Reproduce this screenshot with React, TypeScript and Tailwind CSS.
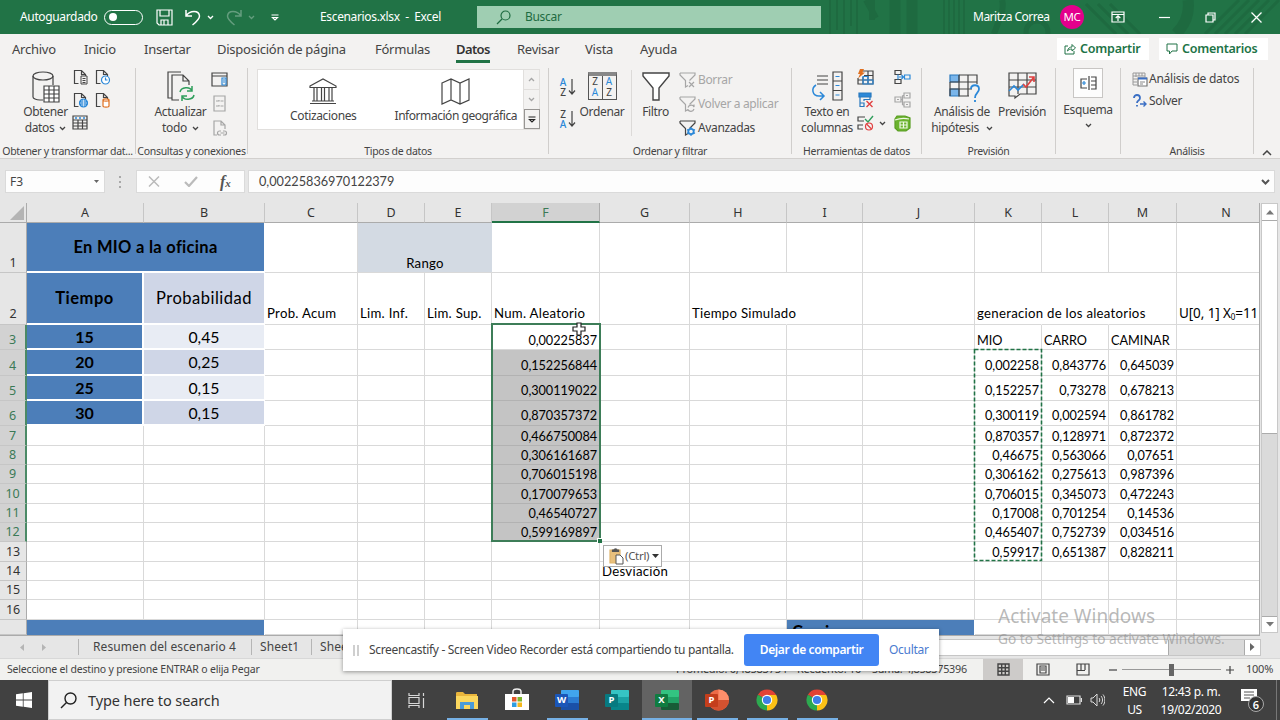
import type { ReactNode } from "react";

/* ---------- shared pieces ---------- */

function Svg({ w, h, c = "", children }: { w: number; h: number; c?: string; children: ReactNode }) {
  return (
    <svg width={w} height={h} viewBox={`0 0 ${w} ${h}`} fill="none" stroke="#444" strokeWidth="1.2" className={"shrink-0 " + c}>
      {children}
    </svg>
  );
}

function Chevron({ c = "" }: { c?: string }) {
  return (
    <Svg w={7} h={5} c={c}>
      <path d="M1 1l2.500 2.500L6 1" stroke="currentColor" strokeWidth="1.3" />
    </Svg>
  );
}

/* ---------- title bar ---------- */

function TitleBar() {
  return (
    <header className="relative flex h-[34px] shrink-0 items-center bg-[#217346] text-[12px] text-white">
      <svg width="460" height="34" className="absolute top-0 right-0" stroke="#1e6a40" fill="none">
        <path d="M10 0v34M17 0v30M24 0v34M31 0v26M37 0v34M124 0v34M129 0v34M134 0v34M139 0v34M144 0v34" strokeWidth="2" />
        <path d="M46 0l10 18M52 0v20" strokeWidth="6" />
        <path d="M75 0v34M92 0v34" strokeWidth="11" />
        <circle cx="217" cy="32" r="11" strokeWidth="5" />
        <path d="M182 0c3 10-4 22-8 34" strokeWidth="6" />
        <path d="M266 4l30 30M278 4l30 30M290 4l30 30M385 34l34-34M395 34l34-34M405 34l34-34M415 34l34-34M425 34l34-34" strokeWidth="3" />
        <path d="M368 0c2 14-4 26-12 34" strokeWidth="11" />
      </svg>
      <div className="relative flex w-full items-center">
        <span className="w-[84px] pl-[20px] whitespace-nowrap tracking-[-0.35px]">Autoguardado</span>
        <span className="ml-[20px] flex h-[15px] w-[39px] items-center rounded-full border border-white pl-[4px]">
          <span className="size-[8px] rounded-full bg-white" />
        </span>
        <Svg w={17} h={17} c="ml-[13px]">
          <path d="M1 1h15v15H3l-2-2zM4 1v6h9V1M5 16v-5h7v5M8 11v5" stroke="#fff" />
        </Svg>
        <Svg w={16} h={17} c="ml-[12px]">
          <path d="M1 1v6h6M1 7C5 1 14 1 14.500 7c0 3-2 5-7 9" stroke="#fff" strokeWidth="1.5" />
        </Svg>
        <Chevron c="ml-[6px]" />
        <Svg w={16} h={17} c="ml-[12px] opacity-30">
          <path d="M15 1v6H9M15 7C11 1 2 1 1.500 7c0 3 2 5 7 9" stroke="#fff" strokeWidth="1.5" />
        </Svg>
        <Chevron c="ml-[6px] opacity-30" />
        <Svg w={8} h={7} c="ml-[16px]">
          <path d="M.5 1h7M1.500 3.500h5L4 6z" stroke="#fff" />
        </Svg>
        <span className="ml-[41px] w-[157px] whitespace-pre tracking-[-0.35px]">Escenarios.xlsx  -  Excel</span>
        <div className="flex h-[22px] w-[344px] items-center bg-[#9fceb2] pl-[19px] text-[12px] text-[#1e6b41]">
          <Svg w={15} h={15}>
            <path d="M1 14l5-5" stroke="#1e6b41" />
            <circle cx="9.500" cy="5.500" r="4.500" stroke="#1e6b41" />
          </Svg>
          <span className="ml-[14px] tracking-[-0.3px]">Buscar</span>
        </div>
        <span className="ml-[152px] w-[87px] whitespace-nowrap tracking-[-0.5px]">Maritza Correa</span>
        <span className="flex size-[24px] items-center justify-center rounded-full bg-[#e3008c] text-[11.500px] tracking-tight">MC</span>
        <Svg w={14} h={12} c="ml-[27px]">
          <path d="M1 1h12v10H1zM1 3.500h12M7 10V5M4.700 7L7 4.800 9.300 7" stroke="#fff" />
        </Svg>
        <Svg w={11} h={11} c="ml-[34px]">
          <path d="M0 5.500h11" stroke="#fff" />
        </Svg>
        <Svg w={11} h={11} c="ml-[35px]">
          <path d="M1 3h7v7H1zM3 3V1h7v7H8" stroke="#fff" />
        </Svg>
        <Svg w={11} h={11} c="ml-[35px]">
          <path d="M.5 .5l10 10M10.500 .5l-10 10" stroke="#fff" strokeWidth="1.3" />
        </Svg>
      </div>
    </header>
  );
}

/* ---------- ribbon tabs ---------- */

const tabs: [string, string][] = [
  ["Archivo", "w-[72px]"],
  ["Inicio", "w-[60px]"],
  ["Insertar", "w-[73px]"],
  ["Disposición de página", "w-[158px]"],
  ["Fórmulas", "w-[81px]"],
  ["Datos", "w-[61px]"],
  ["Revisar", "w-[68px]"],
  ["Vista", "w-[55px]"],
  ["Ayuda", "w-[60px]"],
];

function Tabs() {
  return (
    <nav className="flex h-[32px] shrink-0 items-start bg-[#f3f2f1] pl-[12px] text-[13px] text-[#444]">
      {tabs.map(([t, w]) => (
        <span key={t} className={"flex pt-[5px] whitespace-nowrap tracking-[-0.25px] " + w}>
          <span className={"leading-[20px] " + (t === "Datos" ? "h-[24px] border-b-[3px] border-[#217346] font-semibold text-[#333] tracking-[-0.6px]" : "")}>{t}</span>
        </span>
      ))}
      <div className="mt-[4px] mr-[12px] ml-auto flex gap-[10px] text-[12.500px] font-semibold text-[#217346]">
        <span className="flex h-[22px] w-[92px] items-center bg-white pl-[7px] tracking-[-0.2px]">
          <Svg w={12} h={12} c="mr-[4px]">
            <path d="M4 3H1v8h9V8M3.500 8C4 5 6 4 8 4V1.500l3.500 3.500L8 8V6C6 6 5 6.500 3.500 8z" stroke="#217346" strokeWidth="1" />
          </Svg>
          Compartir
        </span>
        <span className="flex h-[22px] w-[109px] items-center bg-white pl-[7px] tracking-[-0.25px]">
          <Svg w={12} h={12} c="mr-[4px]">
            <path d="M1 1h10v7H6l-2.500 3V8H1z" stroke="#217346" strokeWidth="1" />
          </Svg>
          Comentarios
        </span>
      </div>
    </nav>
  );
}

/* ---------- ribbon icons ---------- */

const page = "M5.500 14.500H1.500V1.500h7l4 4V7M8.500 1.500v4h4";
const B = "#2b88d8";
const G = "#a6a6a6";

function Funnel({ off }: { off?: boolean }) {
  return <path d="M1 1h15v2l-5.500 5.500M1 1v2l5.500 5.500V15L9 13.500" stroke={off ? G : "#444"} />;
}

function Big({ w, icon, a, b }: { w: string; icon: ReactNode; a: string; b?: ReactNode }) {
  return (
    <div className={"flex shrink-0 flex-col items-center pt-[3px] " + w}>
      <div className="flex h-[33px] items-start">{icon}</div>
      <span className="leading-[16px] whitespace-nowrap">{a}</span>
      {b && <span className="flex items-center gap-[5px] leading-[16px] whitespace-nowrap">{b}</span>}
    </div>
  );
}

function Group({ w, label, children }: { w: string; label?: string; children: ReactNode }) {
  return (
    <section className={"mt-[2px] mb-[4px] flex shrink-0 flex-col border-r border-[#d0cecc] " + w}>
      <div className="flex h-[77px] shrink-0 items-start">{children}</div>
      <div className="flex h-[13px] shrink-0 items-start justify-center text-[10.500px] leading-[13px] tracking-[-0.3px] whitespace-nowrap">{label}</div>
    </section>
  );
}

function Ribbon() {
  return (
    <div className="flex h-[93px] shrink-0 border-b border-[#d2d0ce] bg-[#f3f2f1] text-[12px] tracking-[-0.35px] text-[#444]">
      <Group w="w-[136px]" label="Obtener y transformar dat...">
        <Big
          w="w-[68px] pl-[23px]"
          icon={
            <Svg w={28} h={32}>
              <path d="M11 29H8C4 29 1 27.500 1 26V5M21 5v9" />
              <ellipse cx="11" cy="5" rx="10" ry="4" />
              <path d="M12 15h15v16H12z" fill="#fff" />
              <path d="M12 19h15M12 23h15M12 27h15M17 15v16M22 15v16" />
            </Svg>
          }
          a="Obtener"
          b={<>datos <Chevron c="text-[#444]" /></>}
        />
        <div className="ml-[5px] grid grid-cols-2 gap-x-[6px] gap-y-[7px] pt-[1px]">
          <Svg w={16} h={16}>
            <path d={page} />
            <path d="M8 7h6v8H8zM9.500 9.500h3M9.500 11.500h3M9.500 13.500h3" strokeWidth="1" />
          </Svg>
          <Svg w={16} h={16}>
            <path d={page} />
            <circle cx="10.500" cy="11" r="4" fill="#fff" stroke={B} />
            <path d="M10.500 8.500V11h2" stroke={B} />
          </Svg>
          <Svg w={16} h={16}>
            <path d={page} />
            <circle cx="10.500" cy="11" r="4" fill={B} stroke={B} />
            <path d="M7 11h7M10.500 7.500v7M8 9h5M8 13h5" stroke="#fff" strokeWidth=".6" />
          </Svg>
          <Svg w={16} h={16}>
            <path d={page} />
            <path d="M8 8v6c0 1.500 6 1.500 6 0V8c0-1.500-6-1.500-6 0c0 1.500 6 1.500 6 0" fill="#fff" stroke="#e07020" />
          </Svg>
          <Svg w={16} h={15} c="-ml-[1px]">
            <path d="M1 1h14v13H1zM1 5h14M1 8h14M1 11h14M6 5v9M10.500 5v9" />
            <path d="M3 3h2M7 3h2M11 3h2" stroke={B} strokeWidth="1.6" />
          </Svg>
        </div>
      </Group>

      <Group w="w-[112px]" label="Consultas y conexiones">
        <Big
          w="w-[71px] pl-[18px]"
          icon={
            <Svg w={28} h={32}>
              <path d="M5 27H1V1h13M12 29H5V4h11l6 6v4M16 4v6h6" />
              <path d="M13 21c1-5 10-6 12-1M25 15v5h-5M27 24c-1 5-10 6-12 1M15 30v-5h5" stroke="#2e9e5b" strokeWidth="1.500" />
            </Svg>
          }
          a="Actualizar"
          b={<>todo <Chevron c="text-[#444]" /></>}
        />
        <div className="ml-[4px] flex flex-col gap-[8px] pt-[4px]">
          <Svg w={17} h={15}>
            <path d="M1 1h15v13H1zM1 4h15" />
            <path d="M11 6h4v7h-4zM12 8h2M12 10h2" stroke={B} />
          </Svg>
          <Svg w={17} h={17}>
            <path d="M3 1h11v15H3zM5 6h3v-1M9.500 6h3M5 11h3v-1M9.500 11h3" stroke={G} />
          </Svg>
          <Svg w={17} h={17}>
            <path d="M6 15H3V1h7l4 4v4M10 1v4h4" stroke={G} />
            <path d="M10 11H8.500a2 2 0 000 4H10M12 11h1.500a2 2 0 010 4H12M9.500 13h4" stroke={G} />
          </Svg>
        </div>
      </Group>

      <Group w="w-[301px]" label="Tipos de datos">
        <div className="mt-px ml-[9px] flex h-[61px] w-[283px] border border-[#e1dfdd] bg-white">
          <div className="flex w-[131px] flex-col items-center pt-[8px]">
            <Svg w={28} h={27}>
              <path d="M1 8L14 1l13 7v1.500H1zM3 23h22M1 25.500h26M5 10v12.500M8 10v12.500M12.500 10v12.500M15.500 10v12.500M20 10v12.500M23 10v12.500" />
            </Svg>
            <span className="mt-[3px] leading-[16px]">Cotizaciones</span>
          </div>
          <div className="flex w-[135px] flex-col items-center pt-[8px]">
            <Svg w={30} h={27}>
              <path d="M1 5l9-4 9 4 9-4v21l-9 4-9-4-9 4zM10 1v21M19 5v21" />
            </Svg>
            <span className="mt-[3px] leading-[16px] tracking-[-0.45px] whitespace-nowrap">Información geográfica</span>
          </div>
          <div className="ml-auto flex w-[16px] flex-col border-l border-[#e1dfdd] bg-[#f3f2f1]">
            <span className="flex flex-1 items-center justify-center border-b border-[#e1dfdd]"><Chevron c="rotate-180 text-[#a6a6a6]" /></span>
            <span className="flex flex-1 items-center justify-center"><Chevron c="text-[#a6a6a6]" /></span>
            <span className="-mr-px flex h-[20px] items-center justify-center border border-[#979593]">
              <Svg w={8} h={7}><path d="M.5 1h7M1.500 3.500h5L4 6z" stroke="#222" /></Svg>
            </span>
          </div>
        </div>
      </Group>

      <Group w="w-[243px]" label="Ordenar y filtrar">
        <div className="ml-[10px] flex w-[22px] flex-col gap-[12px] pt-[9px]">
          {[["A", "Z"], ["Z", "A"]].map(([p, q]) => (
            <div key={p} className="flex h-[20px] items-center gap-[1px]">
              <span className="flex w-[8px] flex-col items-center text-[10px] leading-[10px] font-medium tracking-normal">
                <span className={p === "A" ? "text-[#2b88d8]" : ""}>{p}</span>
                <span className={q === "A" ? "text-[#2b88d8]" : ""}>{q}</span>
              </span>
              <Svg w={8} h={18}><path d="M4 1v15M1 12.500l3 3.500 3-3.500" /></Svg>
            </div>
          ))}
        </div>
        <Big
          w="w-[42px]"
          icon={
            <div className="mt-px flex h-[28px] w-[29px] border border-t-4 border-[#555] border-t-[#888] bg-[#f3f2f1] text-[10px] leading-[11px] tracking-normal">
              <span className="flex flex-1 flex-col items-center border-r border-[#555]">
                <span>Z</span>
                <span className="text-[#2b88d8]">A</span>
              </span>
              <span className="flex flex-1 flex-col items-center">
                <span className="text-[#2b88d8]">A</span>
                <span>Z</span>
              </span>
            </div>
          }
          a="Ordenar"
        />
        <div className="mt-[2px] ml-[8px] h-[66px] w-px bg-[#dcdad8]" />
        <Big
          w="w-[46px] pl-[1px]"
          icon={<Svg w={28} h={30} c="mt-[1px]"><path d="M1 1h26v3L17 16v12h-6V16L1 4z" fill="#fff" strokeWidth="1.400" /></Svg>}
          a="Filtro"
        />
        <div className="ml-[1px] flex flex-col leading-[24px]">
          <span className="flex items-center gap-[2px] text-[#a6a6a6]">
            <Svg w={17} h={16}><Funnel off /><path d="M10 10l5 5M15 10l-5 5" stroke={G} /></Svg>Borrar
          </span>
          <span className="flex items-center gap-[2px] whitespace-nowrap text-[#a6a6a6]">
            <Svg w={17} h={16}><Funnel off /><path d="M9 11.500c1-3 5-3 6-.5V8.500M15 13c-1 3-5 3-6 .5V15" stroke={G} /></Svg>Volver a aplicar
          </span>
          <span className="flex items-center gap-[2px]">
            <Svg w={17} h={16}><Funnel /><circle cx="12" cy="11.500" r="2.700" stroke={B} strokeWidth="1.800" /><path d="M12 7v2M12 14v2M8 9.500l1.500 1M14.500 12.500l1.500 1M8 13.500l1.500-1M14.500 10.500l1.500-1" stroke={B} /></Svg>Avanzadas
          </span>
        </div>
      </Group>

      <Group w="w-[130px]" label="Herramientas de datos">
        <Big
          w="w-[63px] pl-[7px]"
          icon={
            <Svg w={32} h={32}>
              <path d="M6 5h11M6 9h11M6 13h11M22 1h9v28h-9zM22 10h9M22 19.500h9" />
              <path d="M24.500 5.500h4M24.500 14.500h4M24.500 24h4" stroke={B} />
              <path d="M5 14c-5 3-4 11 3 11h5M9 21l4 4-4 4" stroke={B} strokeWidth="1.500" />
            </Svg>
          }
          a="Texto en"
          b="columnas"
        />
        <div className="ml-[2px] flex w-[18px] flex-col gap-[7px] pt-[1px]">
          <Svg w={17} h={16}>
            <path d="M6 2h10v13H1V9M1 11h15M7 6.500h9M6 15V8M11 15V2" />
            <path d="M6 11V7.500h5V11M6 11h5v4H6zM11 11h5v4h-5z" stroke={B} />
            <path d="M3 0h4L5.500 3.500H8L1 9.500l2-4.500H1z" fill="#e07020" stroke="none" />
          </Svg>
          <Svg w={17} h={16}>
            <path d="M2 1h12v4H2z" fill={B} stroke="#2878bd" /><path d="M3 5v9.500h4V11H3M7 9V7.500h6V5" stroke="#2878bd" />
            <path d="M9.500 9l6 6M15.500 9l-6 6" stroke="#e04040" strokeWidth="1.400" />
          </Svg>
          <Svg w={17} h={16}>
            <path d="M8 2H1v4h6M6 10H1v4h5" /><path d="M8 4l3 3 5-6" stroke="#2e9e5b" strokeWidth="1.400" /><circle cx="12" cy="11.500" r="3.500" stroke="#e04040" /><path d="M9.500 9l5 5" stroke="#e04040" />
          </Svg>
        </div>
        <Chevron c="mt-[53px] ml-[4px] text-[#444]" />
        <div className="ml-[8px] flex flex-col gap-[7px] pt-[1px]">
          <Svg w={17} h={16}>
            <path d="M1 1.500h6v4H1zM1 10.500h6v4H1z" /><path d="M4 5.500v5M5 8h4.500M7.500 6l2 2-2 2M10.500 6H16v4h-5.500z" stroke={B} />
          </Svg>
          <Svg w={17} h={16}>
            <path d="M1 5h6v5H1zM10 1h6v5h-6zM10 10h6v5h-6zM7 7.500h1.500M8.500 3.500V13M8.500 3.500H10M8.500 13H10M3 7.500h2M12 3.500h2M12 12.500h2" stroke={G} />
          </Svg>
          <Svg w={17} h={17}>
            <path d="M3 1h8l5 2v10l-4 3H4l-3-3V4z" fill="#6bb32e" stroke="#5a9e24" />
            <path d="M1 5c5-2 10-2 14-1M6 7h7v6H6zM6 10h7M9.500 7v6" stroke="#eef8e4" />
          </Svg>
        </div>
      </Group>

      <Group w="w-[134px]" label="Previsión">
        <Big
          w="w-[80px]"
          icon={
            <Svg w={32} h={32} c="ml-[6px]">
              <path d="M1 4h9v7H1zM1 18h9v7H1z" fill="#79b5ea" stroke="#2878bd" />
              <path d="M10 4h18v7H1M10 4v21h10M1 11v14M1 18h22M19 4v21M28 11v2" />
              <path d="M22 18c0-5 8-5 8 0 0 4-4 4-4 9M26 29v2" stroke={B} strokeWidth="1.800" />
            </Svg>
          }
          a="Análisis de"
          b={<>hipótesis <Chevron c="ml-[2px] text-[#444]" /></>}
        />
        <Big
          w="w-[40px]"
          icon={
            <Svg w={29} h={28} c="mt-[1px]">
              <path d="M1 1h27v21H12l-5 4v-2H1zM1 8h27M1 15h27M10 1v21M19 1v21" />
              <path d="M1 19l5-5 4 4 6-6" stroke={B} strokeWidth="1.600" />
              <path d="M15 12l3 3 8-10M21 5h5v5" stroke="#e04040" strokeWidth="1.600" />
            </Svg>
          }
          a="Previsión"
        />
      </Group>

      <Group w="w-[65px]">
        <div className="flex w-full flex-col items-center">
          <div className="flex h-[30px] w-[30px] items-center justify-center border border-[#c8c6c4] bg-[#fdfdfd]">
            <Svg w={17} h={16}>
              <path d="M7 4H1v9h6M9 1v14" /><path d="M4 6v4M2 8h4" stroke={B} /><path d="M11 2h5v12h-5M11 6h5M11 10h5" />
            </Svg>
          </div>
          <span className="mt-[4px] leading-[16px]">Esquema</span>
          <Chevron c="mt-[5px] text-[#444]" />
        </div>
      </Group>

      <Group w="w-[133px]" label="Análisis">
        <div className="ml-[11px] flex flex-col leading-[22px] whitespace-nowrap">
          <span className="flex items-center gap-[1px] tracking-[-0.25px]">
            <Svg w={16} h={15}>
              <path d="M1 1h12M1 1v12h4M1 4h12M1 7h4M1 10h4M4 1v4M7 1v3M10 1v3M13 1v4" stroke="#999" strokeWidth="1" />
              <path d="M6 6h9v8H6z" fill="#fff" stroke="#777" /><path d="M6 6.500h9" stroke="#3b6fc4" strokeWidth="2" /><path d="M8 10h5M8 12h3" stroke="#888" strokeWidth="1" />
            </Svg>
            Análisis de datos
          </span>
          <span className="flex items-center gap-[1px] tracking-[-0.25px]">
            <Svg w={16} h={15}>
              <path d="M2 4c0-4 6-4 6 0 0 3-3 2-3 5M5 11v1.500" stroke="#3b6fc4" strokeWidth="1.800" />
              <path d="M8 10h6M11.500 7.500L14 10l-2.500 2.500" stroke="#3b6fc4" strokeWidth="1.400" />
            </Svg>
            Solver
          </span>
        </div>
      </Group>
      <Svg w={10} h={6} c="mt-[84px] ml-[8px]"><path d="M1 5l4-4 4 4" strokeWidth="1.500" /></Svg>
    </div>
  );
}

/* ---------- formula bar ---------- */

function FormulaBar() {
  return (
    <div className="flex h-[44px] shrink-0 items-start bg-[#e6e6e6] pt-[11px] pl-[5px] text-[12px] text-[#444]">
      <div className="flex h-[23px] w-[100px] items-center justify-between border border-[#dadada] bg-[#fdfdfd] pr-[5px] pl-[4px]">
        F3
        <Svg w={5} h={4}><path d="M0 0h5L2.500 3z" fill="#666" stroke="none" /></Svg>
      </div>
      <div className="mt-[6px] ml-[14px] flex w-[17px] flex-col gap-[3px]">
        <i className="size-[2px] bg-[#a8a8a8]" />
        <i className="size-[2px] bg-[#a8a8a8]" />
        <i className="size-[2px] bg-[#a8a8a8]" />
      </div>
      <div className="flex h-[23px] w-[109px] items-center border border-[#dadada] bg-[#fdfdfd] pl-[11px]">
        <Svg w={12} h={11}><path d="M1 .5l10 10M11 .5l-10 10" stroke="#bbb" strokeWidth="1.500" /></Svg>
        <Svg w={14} h={11} c="ml-[24px]"><path d="M1 6l4 4 8-9" stroke="#bbb" strokeWidth="2.200" /></Svg>
        <span className="ml-[22px] font-['Liberation_Serif',serif] text-[16px] leading-none font-semibold text-[#555] italic">
          f<span className="text-[11px]">x</span>
        </span>
      </div>
      <div className="ml-[3px] flex h-[23px] w-[1027px] items-center justify-between border border-[#dadada] bg-[#fdfdfd] pr-[4px] pl-[10px]">
        <span className="font-[Lato,'Noto_Sans',sans-serif] text-[12.700px]">0,00225836970122379</span>
        <Svg w={9} h={6}><path d="M1 1l3.500 3.500L8 1" strokeWidth="2" stroke="#555" /></Svg>
      </div>
    </div>
  );
}

/* ---------- worksheet ---------- */

const cols = "ABCDEFGHIJKLMN".split("");
const rowH = [
  "h-[50px]", "h-[52px]", "h-[25px]", "h-[26px]", "h-[25px]", "h-[25px]", "h-[20px]", "h-[19px]", "h-[19px]",
  "h-[20px]", "h-[19px]", "h-[19px]", "h-[20px]", "h-[19px]", "h-[19px]", "h-[20px]", "h-[15px]",
];
const F = ["0,00225837", "0,152256844", "0,300119022", "0,870357372", "0,466750084", "0,306161687", "0,706015198", "0,170079653", "0,46540727", "0,599169897"];
const K = ["0,002258", "0,152257", "0,300119", "0,870357", "0,46675", "0,306162", "0,706015", "0,17008", "0,465407", "0,59917"];
const L = ["0,843776", "0,73278", "0,002594", "0,128971", "0,563066", "0,275613", "0,345073", "0,701254", "0,752739", "0,651387"];
const M = ["0,645039", "0,678213", "0,861782", "0,872372", "0,07651", "0,987396", "0,472243", "0,14536", "0,034516", "0,828211"];
const times = ["15", "20", "25", "30"];
const probs = ["0,45", "0,25", "0,15", "0,15"];
const row2: Record<string, string> = {
  C: "Prob. Acum", D: "Lim. Inf.", E: "Lim. Sup.", F: "Num. Aleatorio", H: "Tiempo Simulado", K: "generacion de los aleatorios",
};
const row3: Record<string, string> = { K: "MIO", L: "CARRO", M: "CAMINAR" };

const base = "flex min-w-0 overflow-visible whitespace-nowrap ";
const line = "border-r border-b border-[#d9d9d9] ";
const words = "text-[13.200px] tracking-[0.28px] ";

function Cell({ r, c }: { r: number; c: string }) {
  if (r === 1) {
    if (c === "B" || c === "E") return null;
    if (c === "A") return <div className={base + "col-span-2 items-center justify-center border-r border-b-2 border-white bg-[#4c7eb9] text-[16.500px] leading-none font-bold tracking-[0.3px]"}>En MIO a la oficina</div>;
    if (c === "D") return <div className={base + words + "col-span-2 items-end justify-center border-b border-[#d9d9d9] bg-[#d3dae3] leading-[18px]"}>Rango</div>;
  }
  if (r >= 2 && r <= 6) {
    const txt = r === 2 ? "Tiempo" : times[r - 3];
    if (c === "A") return <div className={base + "items-center justify-center border-r-2 border-b-2 border-white bg-[#4c7eb9] leading-none font-bold " + (r === 2 ? "text-[16.500px] tracking-[0.5px]" : "text-[16px]")}>{txt}</div>;
    if (c === "B")
      return (
        <div className={base + "items-center justify-center border-r border-b-2 border-white leading-none " + (r === 2 ? "text-[16.500px] tracking-[0.5px] " : "text-[15.800px] ") + (r === 3 || r === 5 ? "bg-[#e8ecf4]" : "bg-[#cfd6e7]")}>
          {r === 2 ? "Probabilidad" : probs[r - 3]}
        </div>
      );
  }
  if (r === 17 && (c === "A" || c === "I")) {
    return <div className={base + "col-span-2 h-[15px] items-start overflow-hidden border-r border-white bg-[#4c7eb9] pt-px pl-[5px] text-[16.500px] leading-[22px] font-bold"}>{c === "I" ? "Caminar" : ""}</div>;
  }
  if (r === 17 && (c === "B" || c === "J")) return null;

  let text: ReactNode = "";
  let right = false;
  let extra = "";
  if (r === 2) {
    text = row2[c] ?? "";
    extra = "pb-[2px] " + words;
  }
  if (r === 2 && c === "N") {
    text = <span className="text-[13.500px] tracking-[-0.1px] font-['Noto_Sans',sans-serif]">U[0, 1] X<sub className="text-[8px]">0</sub>=11</span>;
    extra = "overflow-hidden pb-[2px] ";
  }
  if (r === 3) text = row3[c] ?? "";
  if (r === 14 && c === "G") {
    text = "Desviación";
    extra = words;
  }
  if (c === "F" && r >= 3 && r <= 12) {
    text = F[r - 3];
    right = true;
    if (r > 3) extra = "bg-[#c4c4c4] border-b-[#b2b2b2] ";
  }
  if (r >= 4 && r <= 13 && "KLM".includes(c)) {
    text = (c === "K" ? K : c === "L" ? L : M)[r - 4];
    right = true;
  }
  if (r >= 4 && r <= 6) extra += "pb-px ";
  const spill = r === 2 && "HKL".includes(c);
  return (
    <div className={base + line + extra + "items-end leading-[18px] " + (right ? "justify-end pr-[2px] tracking-[-0.05px] " : "pl-[2px] ") + (spill ? "border-r-transparent" : "")}>
      {text}
    </div>
  );
}

function Sheet() {
  return (
    <div className="flex h-[433px] shrink-0 bg-[#e6e6e6]">
      <div className="relative h-[433px] w-[1260px] overflow-hidden border-r border-b border-[#ababab] bg-white font-[Lato,'Noto_Sans',sans-serif] text-[12.700px] text-black">
        <div className="grid grid-cols-[27px_117px_121px_93px_67px_67px_108px_90px_97px_76px_112px_67px_67px_68px_83px]">
          <div className="flex h-[20px] items-end justify-end border-r border-b border-[#ababab] bg-[#e6e6e6] pr-[2px] pb-[2px]">
            <Svg w={14} h={14}><path d="M14 0v14H0z" fill="#b4b4b4" stroke="none" /></Svg>
          </div>
          {cols.map((c) => (
            <div
              key={c}
              className={
                "flex h-[20px] items-center justify-center border-r pt-[2px] font-['Noto_Sans',sans-serif] text-[12.500px] " +
                (c === "F" ? "border-b-2 border-r-[#ababab] border-b-[#217346] bg-[#d2d2d2] text-[#3b7a56]" : "border-b border-[#c6c6c6] border-b-[#ababab] bg-[#e6e6e6] text-[#333]") +
                (c === "N" ? " pl-[16px]" : "")
              }
            >
              {c}
            </div>
          ))}
          {rowH.map((h, i) => {
            const r = i + 1;
            const sel = r >= 3 && r <= 12;
            return [
              <div
                key={r}
                className={
                  "flex items-end justify-center border-b border-[#c6c6c6] font-['Noto_Sans',sans-serif] text-[12.500px] leading-[18px] tracking-[-0.2px] " +
                  h +
                  (r === 2 ? " pb-px" : "") +
                  (sel ? " border-r-2 border-r-[#4b8a66] bg-[#d2d2d2] text-[#3b7a56]" : " border-r border-r-[#ababab] bg-[#e6e6e6] text-[#333]")
                }
              >
                {r < 17 ? r : ""}
              </div>,
              ...cols.map((c) => <Cell key={c + r} r={r} c={c} />),
            ];
          })}
        </div>

        <div className="absolute top-[120px] left-[491px] h-[219px] w-[110px] border-2 border-[#3d7d58]">
          <span className="absolute -right-[3px] -bottom-[3px] size-[5px] border-t border-l border-white bg-[#217346]" />
        </div>
        <svg className="absolute top-[145px] left-[973px]" width="70" height="214" fill="none">
          <rect x="1.500" y="1.500" width="67" height="211" stroke="#217346" strokeWidth="1.600" strokeDasharray="4 2" />
        </svg>
        <svg className="absolute top-[119px] left-[572px]" width="14" height="15">
          <path d="M5 1h4v4h4v4H9v4H5V9H1V5h4z" fill="#fff" stroke="#222" strokeWidth="1.200" />
        </svg>
        <div className="absolute top-[342px] left-[603px] flex h-[22px] w-[59px] items-center border border-[#ababab] bg-white pl-[5px] font-['Noto_Sans',sans-serif] text-[11.500px] tracking-[-0.3px] text-[#555]">
          <Svg w={15} h={17}>
            <path d="M1 2h10v13H1z" fill="#e8c07d" stroke="#e0b56c" />
            <path d="M3.500 3.500V2h1.500c0-1.500 3-1.500 3 0h1.500v1.500z" fill="#555" stroke="#555" />
            <path d="M7 7h4l3 3v6H7z" fill="#fff" stroke="#555" strokeWidth="1" />
          </Svg>
          <span className="ml-px">(Ctrl)</span>
          <Svg w={7} h={5} c="ml-[3px]"><path d="M0 0h7L3.500 4z" fill="#333" stroke="none" /></Svg>
        </div>
      </div>
      <div className="ml-[1px] flex h-[430px] w-[17px] flex-col border border-[#c8c8c8] bg-[#dadada]">
        <span className="flex h-[17px] items-center justify-center border-b border-[#ababab] bg-white">
          <Svg w={8} h={5}><path d="M0 4.500h8L4 0z" fill="#777" stroke="none" /></Svg>
        </span>
        <span className="h-[213px] border-b border-[#ababab] bg-white" />
        <span className="mt-auto flex h-[16px] items-center justify-center border-t border-[#ababab] bg-white">
          <Svg w={8} h={5}><path d="M0 0h8L4 4.500z" fill="#777" stroke="none" /></Svg>
        </span>
      </div>
    </div>
  );
}

/* ---------- sheet tabs and status bar ---------- */

function SheetTabs() {
  return (
    <div className="flex h-[22px] shrink-0 items-center bg-[#e6e6e6] text-[12px] tracking-[0.1px] text-[#444]">
      <Svg w={4} h={7} c="ml-[20px]"><path d="M4 0v7L0 3.500z" fill="#b5b5b5" stroke="none" /></Svg>
      <Svg w={4} h={7} c="ml-[18px]"><path d="M0 0v7l4-3.500z" fill="#b5b5b5" stroke="none" /></Svg>
      <span className="mb-px ml-[32px] w-[174px] border-x border-[#b5b5b5] pl-[14px] leading-[16px] whitespace-nowrap">Resumen del escenario 4</span>
      <span className="mb-px w-[60px] border-r border-[#b5b5b5] pl-[8px] leading-[16px]">Sheet1</span>
      <span className="mb-px w-[60px] pl-[8px] leading-[16px]">Sheet2</span>
      <div className="mr-[19px] ml-auto flex h-[17px] w-[492px] border border-[#c6c6c6] bg-[#dadada]">
        <span className="w-[399px] border-r border-[#ababab] bg-white" />
        <span className="ml-auto flex w-[16px] items-center justify-center border-l border-[#ababab] bg-white">
          <Svg w={5} h={8}><path d="M0 0v8l4.500-4z" fill="#666" stroke="none" /></Svg>
        </span>
      </div>
    </div>
  );
}

function StatusBar() {
  return (
    <div className="flex h-[22px] shrink-0 items-center border-t border-[#d8d8d8] bg-[#f1f1ef] text-[11px] tracking-[-0.25px] text-[#444]">
      <span className="w-[676px] pl-[7px] text-[10.500px] tracking-[-0.18px]">Seleccione el destino y presione ENTRAR o elija Pegar</span>
      <span className="w-[121px] whitespace-nowrap">Promedio: 0,48583754</span>
      <span className="w-[75px] whitespace-nowrap">Recuento: 10</span>
      <span className="w-[111px] text-[10.800px] whitespace-nowrap">Suma: 4,858375396</span>
      <span className="flex h-full w-[40px] items-center justify-center bg-[#cdcbc9]">
        <Svg w={13} h={13}><path d="M1 1h11v11H1zM1 4.700h11M1 8.300h11M4.700 1v11M8.300 1v11" strokeWidth="1.400" /></Svg>
      </span>
      <span className="flex w-[40px] justify-center">
        <Svg w={14} h={13}><path d="M1 1h12v11H1zM4 3h6v7H4zM5 5h4M5 7h4" /></Svg>
      </span>
      <span className="flex w-[40px] justify-center">
        <Svg w={14} h={13}><path d="M1 1h12v11H1zM5 1v6M9 1v6M1 7.500h8" /></Svg>
      </span>
      <Svg w={8} h={8} c="ml-[6px]"><path d="M0 4h8" /></Svg>
      <span className="ml-[5px] flex w-[99px] items-center">
        <i className="h-px w-[47px] bg-[#999]" />
        <i className="h-[12px] w-[5px] bg-[#666]" />
        <i className="h-px flex-1 bg-[#999]" />
      </span>
      <Svg w={8} h={8} c="ml-[5px]"><path d="M0 4h8M4 0v8" /></Svg>
      <span className="ml-[12px]">100%</span>
    </div>
  );
}

/* ---------- taskbar ---------- */

function OfficeIcon({ letter, box, tones, round }: { letter: string; box: string; tones: [string, string, string]; round?: boolean }) {
  return (
    <span className="relative flex h-[22px] w-[24px] items-center">
      <svg width="24" height="22" className="absolute inset-0">
        {round ? (
          <>
            <circle cx="13.500" cy="11" r="10.500" fill={tones[0]} />
            <path d="M13.500 .5a10.500 10.500 0 0110.500 10.500H13.500z" fill={tones[1]} />
            <path d="M3 11a10.500 10.500 0 0021 0z" fill={tones[2]} />
          </>
        ) : (
          <>
            <rect x="6" y="1" width="18" height="20" rx="1.500" fill={tones[1]} />
            <rect x="6" y="1" width="18" height="7" rx="1" fill={tones[0]} />
            <rect x="6" y="14" width="18" height="7" rx="1" fill={tones[2]} />
          </>
        )}
      </svg>
      <span className={"relative flex size-[13px] items-center justify-center rounded-[1px] text-[9.500px] leading-none font-bold text-white " + box}>{letter}</span>
    </span>
  );
}

function Chrome() {
  return (
    <svg width="22" height="22" viewBox="0 0 22 22">
      <path d="M11 11L1.900 5.750A10.500 10.500 0 0120.100 5.750z" fill="#e24234" />
      <path d="M11 11L20.100 5.750A10.500 10.500 0 0111 21.500z" fill="#fbc116" />
      <path d="M11 11v10.500A10.500 10.500 0 011.900 5.750z" fill="#2da94f" />
      <path d="M11 6h9.300L11 21.500l4.300-8z" fill="#fbc116" />
      <circle cx="11" cy="11" r="5.200" fill="#fff" />
      <circle cx="11" cy="11" r="4.100" fill="#3f7ee8" />
    </svg>
  );
}

function Slot({ on, active, children }: { on?: boolean; active?: boolean; children: ReactNode }) {
  return (
    <span className={"flex h-full w-[50px] flex-col items-center justify-between " + (active ? "bg-[#636363]" : "")}>
      <span className="flex flex-1 items-center">{children}</span>
      <i className={"-mt-[2px] h-[2px] " + (active ? "w-[50px] " : "w-[41px] ") + (on ? "bg-[#76b0e4]" : "")} />
    </span>
  );
}

function Taskbar() {
  return (
    <footer className="flex h-[40px] shrink-0 items-center bg-[#414141] text-[12px] text-white">
      <span className="flex w-[48px] justify-center">
        <svg width="16" height="16" fill="#fff"><path d="M0 2.300l6.800-1v6.300H0zM7.600 1.200L16 0v7.600H7.600zM0 8.400h6.800v6.300L0 13.700zM7.600 8.400H16V16l-8.400-1.200z" /></svg>
      </span>
      <div className="flex h-full w-[344px] items-center border border-[#cfcfcf] bg-[#f2f2f2] pt-[2px] pl-[11px] text-[14.500px] tracking-[-0.1px] text-[#333]">
        <Svg w={17} h={17} c="-mt-[2px]"><path d="M1 16l5.500-5.500" stroke="#222" strokeWidth="1.500" /><circle cx="10.500" cy="6.500" r="5.500" stroke="#222" strokeWidth="1.400" /></Svg>
        <span className="ml-[11px]">Type here to search</span>
      </div>
      <span className="flex w-[48px] justify-center">
        <Svg w={17} h={15}><path d="M1 0v2.500h10V0M1 4.500h10v6H1zM1 15v-2.500h10V15M15.500 0v3M15.500 5v10" stroke="#d8d8d8" /></Svg>
      </span>
      <i className="w-[2px]" />
      <Slot on>
        <svg width="22" height="19">
          <path d="M0 2.500C0 1 .5 1 2 1h5l2 2h12v15H0z" fill="#e9b53c" /><path d="M0 5h22v13H0z" fill="#fbd75e" />
          <path d="M4 18v-7h14v7h-4v-4H8v4z" fill="#4a9bd8" />
        </svg>
      </Slot>
      <Slot>
        <svg width="24" height="24">
          <path d="M8 7V3.500C8 0 16 0 16 3.500V7" fill="none" stroke="#eee" strokeWidth="1.500" /><path d="M0 6h24v16H0z" fill="#fff" />
          <path d="M7 9h4.500v4.500H7z" fill="#e2572b" /><path d="M12.500 9H17v4.500h-4.500z" fill="#7db52b" />
          <path d="M7 14.500h4.500V19H7z" fill="#2f9de0" /><path d="M12.500 14.500H17V19h-4.500z" fill="#f5b81c" />
        </svg>
      </Slot>
      <Slot on><OfficeIcon letter="W" box="bg-[#1b56b8]" tones={["#41a5ee", "#2b7cd3", "#1a50a8"]} /></Slot>
      <Slot><OfficeIcon letter="P" box="bg-[#077a80]" tones={["#36c4c4", "#1ba3a5", "#08858a"]} /></Slot>
      <Slot on active><OfficeIcon letter="X" box="bg-[#107c41]" tones={["#33c481", "#21a366", "#185c37"]} /></Slot>
      <Slot on><OfficeIcon round letter="P" box="bg-[#c43e1c]" tones={["#ed6c47", "#ff8f6b", "#d35230"]} /></Slot>
      <Slot on><Chrome /></Slot>
      <Slot on><Chrome /></Slot>
      <div className="ml-auto flex items-center">
        <Svg w={12} h={7}><path d="M1 6l5-5 5 5" stroke="#fff" /></Svg>
        <Svg w={16} h={10} c="ml-[11px]"><path d="M1 1h13v8H1zM15.500 3v4" stroke="#ddd" /><path d="M2 2h6v6H2z" fill="#fff" stroke="none" /></Svg>
        <Svg w={15} h={14} c="ml-[8px]"><path d="M1 5h2l4-4v12L3 9H1zM9 5c1 1 1 3 0 4M11 3c2 2 2 6 0 8M13 1.500c2.500 3 2.500 8 0 11" stroke="#ddd" strokeWidth="1" /></Svg>
        <span className="mt-px ml-[11px] flex w-[37px] flex-col items-center leading-[18px] tracking-[-0.4px]">
          <span>ENG</span>
          <span>US</span>
        </span>
        <span className="mt-px ml-[2px] flex w-[72px] flex-col items-center leading-[18px] tracking-[-0.3px] whitespace-nowrap">
          <span>12:43 p. m.</span>
          <span>19/02/2020</span>
        </span>
        <span className="relative ml-[13px] h-[24px] w-[26px]">
          <svg width="18" height="17"><path d="M1 1h16v12h-4v4l-4-4H1z" fill="#fff" /><path d="M4 4h10M4 7h10M4 10h6" stroke="#555" /></svg>
          <span className="absolute top-[8px] left-[8px] flex size-[16px] items-center justify-center rounded-full border border-[#aaa] bg-[#333] text-[11px] leading-none font-semibold">6</span>
        </span>
        <i className="ml-[10px] h-[40px] w-px bg-[#777]" />
        <i className="w-[3px]" />
      </div>
    </footer>
  );
}

/* ---------- overlays ---------- */

function SharingBar() {
  return (
    <div className="absolute top-[629px] left-[343px] flex h-[42px] w-[596px] items-center bg-white text-[12px] text-[#444] shadow-[0_1px_4px_rgba(0,0,0,0.4)]">
      <i className="ml-[10px] h-[11px] w-[6px] border-x-2 border-[#cfcfcf]" />
      <span className="ml-[10px] w-[375px] tracking-[-0.33px] whitespace-nowrap">Screencastify - Screen Video Recorder está compartiendo tu pantalla.</span>
      <span className="flex h-[32px] w-[135px] items-center justify-center rounded-[3px] bg-[#4285f4] font-semibold tracking-[-0.38px] whitespace-nowrap text-white">Dejar de compartir</span>
      <span className="ml-[10px] tracking-[-0.3px] text-[#4a7bd0]">Ocultar</span>
    </div>
  );
}

function Watermark() {
  return (
    <div className="pointer-events-none absolute top-[603px] left-[998px] whitespace-nowrap text-[#8a8a8a]/60">
      <div className="text-[19px] leading-[26px]">Activate Windows</div>
      <div className="text-[13.700px] leading-[20px]">Go to Settings to activate Windows.</div>
    </div>
  );
}

export default function App() {
  return (
    <div className="relative flex h-[720px] w-[1280px] flex-col overflow-hidden bg-[#e6e6e6] font-['Noto_Sans',sans-serif]">
      <TitleBar />
      <Tabs />
      <Ribbon />
      <FormulaBar />
      <Sheet />
      <SheetTabs />
      <StatusBar />
      <Taskbar />
      <Watermark />
      <SharingBar />
    </div>
  );
}
